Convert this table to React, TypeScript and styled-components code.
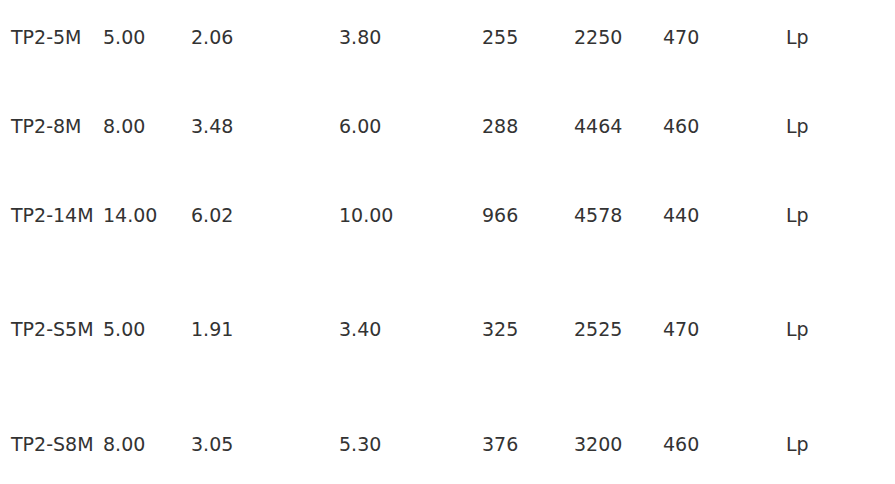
import styled, { createGlobalStyle } from 'styled-components'

const GlobalStyle = createGlobalStyle`
  html, body {
    margin: 0;
    padding: 0;
    background: #ffffff;
  }
  body {
    font-family: 'DejaVu Sans', Verdana, sans-serif;
    color: #333333;
  }
`

const Table = styled.div`
  display: grid;
  grid-template-columns: 92px 88px 148px 143px 92px 89px 123px 60px;
  padding: 25px 0 0 8px;
  width: 895px;
  box-sizing: border-box;
`

const Row = styled.div<{ height: number }>`
  display: contents;
  & > div {
    height: ${({ height }) => `${height}px`};
  }
`

const Cell = styled.div`
  padding-left: 3px;
  font-size: 19px;
  line-height: 24px;
  white-space: nowrap;
`

const rows = [
  { h: 89, cells: ['TP2-5M', '5.00', '2.06', '3.80', '255', '2250', '470', 'Lp'] },
  { h: 89, cells: ['TP2-8M', '8.00', '3.48', '6.00', '288', '4464', '460', 'Lp'] },
  { h: 114, cells: ['TP2-14M', '14.00', '6.02', '10.00', '966', '4578', '440', 'Lp'] },
  { h: 115, cells: ['TP2-S5M', '5.00', '1.91', '3.40', '325', '2525', '470', 'Lp'] },
  { h: 60, cells: ['TP2-S8M', '8.00', '3.05', '5.30', '376', '3200', '460', 'Lp'] },
]

const App = () => {
  return (
    <>
      <GlobalStyle />
      <Table>
        {rows.map((row) => (
          <Row key={row.cells[0]} height={row.h}>
            {row.cells.map((c, i) => (
              <Cell key={i}>{c}</Cell>
            ))}
          </Row>
        ))}
      </Table>
    </>
  )
}

export default App
